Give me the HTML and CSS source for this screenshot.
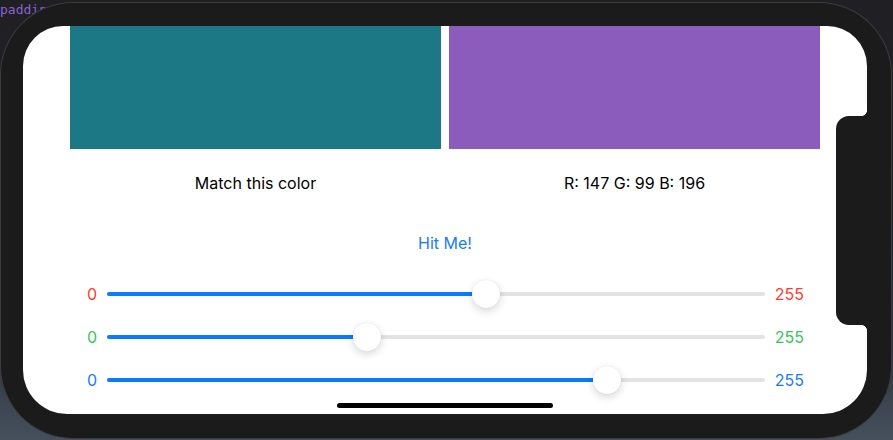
FILE: index.html
```html
<!DOCTYPE html>
<html lang="en">
<head>
<meta charset="utf-8">
<title>Bullseye Color</title>
<link rel="stylesheet" href="styles.css">
</head>
<body>
<div class="desk">
  <div class="code-line">padding</div>
  <div class="device">
    <div class="screen">
      <div class="swatches">
        <div class="swatch target"></div>
        <div class="swatch guess"></div>
      </div>
      <div class="labels">
        <div class="label">Match this color</div>
        <div class="label">R: 147 G: 99 B: 196</div>
      </div>
      <div class="action">
        <span class="hit">Hit Me!</span>
      </div>
      <div class="sliders">
        <div class="slider-row red">
          <span class="end">0</span>
          <div class="track" style="--v:0.58">
            <div class="fill"></div>
            <div class="thumb"></div>
          </div>
          <span class="end">255</span>
        </div>
        <div class="slider-row green">
          <span class="end">0</span>
          <div class="track" style="--v:0.391">
            <div class="fill"></div>
            <div class="thumb"></div>
          </div>
          <span class="end">255</span>
        </div>
        <div class="slider-row blue">
          <span class="end">0</span>
          <div class="track" style="--v:0.772">
            <div class="fill"></div>
            <div class="thumb"></div>
          </div>
          <span class="end">255</span>
        </div>
      </div>
      <div class="notch"></div>
      <div class="home-indicator"></div>
    </div>
  </div>
</div>
</body>
</html>
```

FILE: styles.css
```css
html, body {
  margin: 0;
  padding: 0;
}

body {
  width: 893px;
  height: 440px;
  overflow: hidden;
  background: linear-gradient(180deg, #1f1f24 0%, #22232a 50%, #2f3540 80%, #46505d 100%);
  font-family: Inter, "Liberation Sans", sans-serif;
}

.desk {
  position: relative;
  width: 893px;
  height: 440px;
}

.code-line {
  position: absolute;
  left: 0;
  top: 1px;
  font-family: "DejaVu Sans Mono", monospace;
  font-size: 13px;
  line-height: 18px;
  color: #8c62cf;
}

.device {
  position: absolute;
  left: 1px;
  top: 3px;
  width: 890px;
  height: 435px;
  box-sizing: border-box;
  padding: 23px 24px 24px 22px;
  background: #1b1b1b;
  border-radius: 72px;
  box-shadow: 0 0 0 1px #3c3c3e;
}

.screen {
  position: relative;
  width: 844px;
  height: 388px;
  background: #ffffff;
  border-radius: 40px 40px 44px 44px;
  overflow: hidden;
  display: flex;
  flex-direction: column;
}

.swatches {
  display: flex;
  gap: 8px;
  padding: 0 47px;
}

.swatch {
  flex: 1;
  height: 123px;
}

.target {
  background: #1b7884;
}

.guess {
  background: #8c5cbd;
}

.labels {
  display: flex;
  gap: 8px;
  padding: 0 47px;
  margin-top: 24px;
}

.label {
  flex: 1;
  text-align: center;
  font-size: 16px;
  line-height: 20px;
  color: #000000;
}

.action {
  display: flex;
  justify-content: center;
  margin-top: 40px;
}

.hit {
  font-size: 16px;
  line-height: 20px;
  color: #1a7cf5;
}

.sliders {
  display: flex;
  flex-direction: column;
  padding: 0 63px 0 64px;
  margin-top: 19px;
}

.slider-row {
  height: 43px;
  display: flex;
  align-items: center;
  gap: 10px;
}

.end {
  font-size: 16px;
  line-height: 20px;
}

.red .end { color: #ff3b30; }
.green .end { color: #34c759; }
.blue .end { color: #1a7cf5; }

.track {
  position: relative;
  flex: 1;
  height: 4px;
  border-radius: 2px;
  background: #e3e3e6;
}

.fill {
  height: 4px;
  border-radius: 2px;
  background: #0a7aff;
  width: calc((100% - 28px) * var(--v) + 14px);
}

.thumb {
  position: absolute;
  top: -12px;
  left: calc((100% - 28px) * var(--v));
  width: 28px;
  height: 28px;
  border-radius: 50%;
  background: #ffffff;
  box-shadow: 0 3px 8px rgba(0, 0, 0, 0.16), 0 0 1px rgba(0, 0, 0, 0.14);
}

.notch {
  position: absolute;
  left: 813px;
  top: 90px;
  width: 40px;
  height: 209px;
  background: #1b1b1b;
  border-radius: 13px 0 0 13px;
}

.notch::before,
.notch::after {
  content: "";
  position: absolute;
  right: 9px;
  width: 5px;
  height: 5px;
}

.notch::before {
  top: -5px;
  background: radial-gradient(circle at 0 0, transparent 4.5px, #1b1b1b 5px);
}

.notch::after {
  bottom: -5px;
  background: radial-gradient(circle at 0 100%, transparent 4.5px, #1b1b1b 5px);
}

.home-indicator {
  position: absolute;
  left: 314px;
  bottom: 6px;
  width: 216px;
  height: 5px;
  border-radius: 3px;
  background: #000000;
}
```
